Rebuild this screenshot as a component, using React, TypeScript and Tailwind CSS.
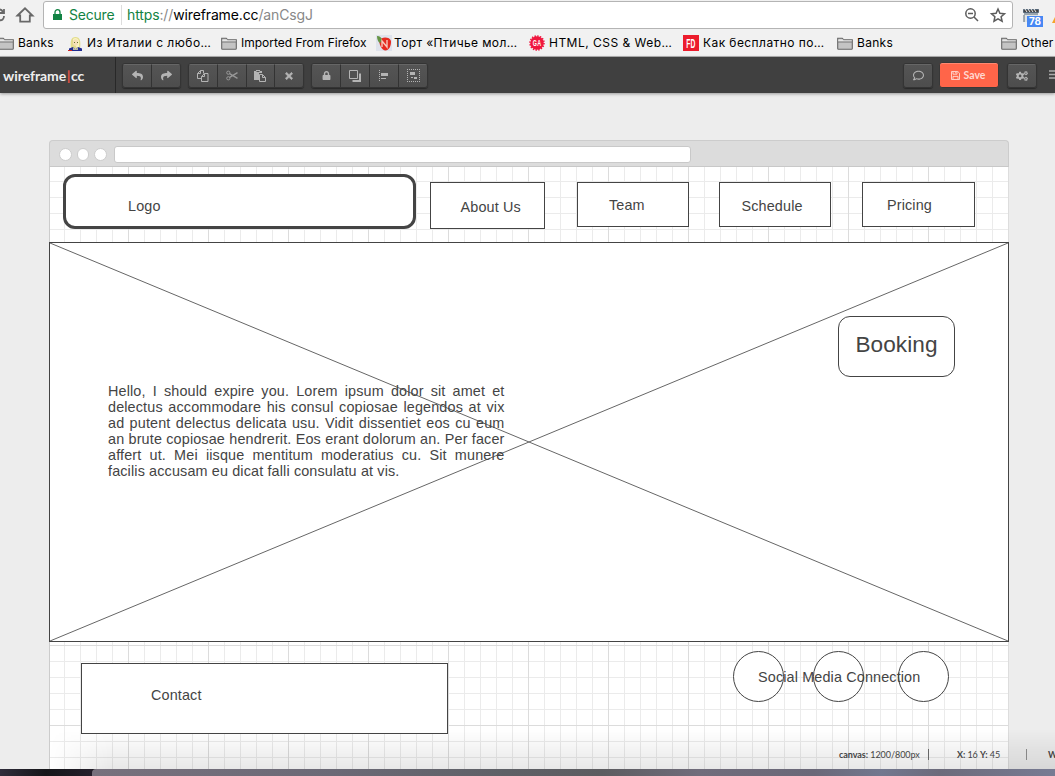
import React from "react";
import { FaReply, FaShare, FaTimes, FaLock, FaRegComment, FaCogs } from "react-icons/fa";

function Folder() {
  return (
    <svg width="16" height="13" viewBox="0 0 16 13" className="shrink-0" fill="none">
      <path d="M.7 11.500V1.200h4.600l1.400 1.600h8.600v8.700a.7.7 0 0 1-.7.7H1.400a.7.7 0 0 1-.7-.7Z" fill="#c4c4c4" stroke="#666" strokeWidth="1.100" />
      <path d="M1.200 4h13.600M1.400 3.100h5" stroke="#eee" strokeWidth="1" />
      <path d="M1 5h14" stroke="#777" strokeWidth="1" />
    </svg>
  );
}

function Blonde() {
  return (
    <svg width="15" height="15" viewBox="0 0 15 15" className="shrink-0">
      <path d="M3 12C2 5 3 1 7.500 1S13 5 12 12Z" fill="#e3dc8b" />
      <path d="M5 3c2-2 6-1 6 3v6H9L5 5Z" fill="#f8f4c0" />
      <ellipse cx="7.500" cy="6.500" rx="2.600" ry="3.200" fill="#f4dfb8" />
      <path d="M1 12.500 5 11l2.500 2L10 11l4 1.500V15H1Z" fill="#202b91" />
      <path d="M0 14h4v1H0Z" fill="#c22" />
      <path d="m5 11 2.500 2L10 11v3H5Z" fill="#b8b7a0" />
      <path d="M6 6h1v1H6Zm3 0h1v1H9Z" fill="#66752f" />
    </svg>
  );
}

function Strawberry() {
  return (
    <svg width="16" height="16" viewBox="0 0 16 16" className="shrink-0">
      <path d="M0 0h16v16H0Z" fill="#dfe3ec" />
      <path d="M3.500 5c2-3.500 10.500-3.500 11.500 1 .5 5-2.500 9.500-5.500 9.500C6 15.500 2.500 9 3.500 5Z" fill="#e52b20" />
      <path d="M1 1c3 0 4 1 5 4L4 8C2 7 1 4 1 1Z" fill="#669444" />
      <path d="M6 12V6l5 6V5" fill="none" stroke="#f7c8bb" strokeWidth="1.400" />
    </svg>
  );
}

function Badge() {
  return (
    <svg width="16" height="16" viewBox="0 0 16 16" className="shrink-0 overflow-visible">
      <circle cx="8" cy="8" r="6.800" fill="#f0173f" />
      <circle cx="8" cy="8" r="7" fill="none" stroke="#f0173f" strokeWidth="1.600" strokeDasharray="1.4 1.35" />
      <text x="8" y="11.300" fontFamily="Liberation Sans" fontSize="9" fontWeight="700" fill="#fff" textAnchor="middle" textLength="8.500" lengthAdjust="spacingAndGlyphs">GA</text>
    </svg>
  );
}

function FdBadge() {
  return (
    <svg width="16" height="16" viewBox="0 0 16 16" className="shrink-0 overflow-visible">
      <path d="M0 0h16v16H0Z" fill="#ec1c2c" />
      <text x="8" y="12.500" fontFamily="Liberation Sans" fontSize="12.500" fontWeight="700" fill="#fff" textAnchor="middle" textLength="9.500" lengthAdjust="spacingAndGlyphs">FD</text>
    </svg>
  );
}

function CopyIcon() {
  return (
    <svg width="12" height="12" viewBox="0 0 12 12" fill="none" stroke="currentColor">
      <path d="M4.500 8.500h-4v-5l3-3h3v3m-3-3v3h-3M7.500 3.500h3.500v8h-6.500v-5Zm0 0v3h-3" />
    </svg>
  );
}

function ScissorsIcon() {
  return (
    <svg width="12" height="11" viewBox="0 0 12 11" fill="none" stroke="#989898">
      <circle cx="2.300" cy="2.700" r="1.600" />
      <circle cx="2.300" cy="8.300" r="1.600" />
      <path d="m3.600 3.600 7.900 4.800M3.600 7.400l7.900-4.800" strokeWidth="1.300" />
    </svg>
  );
}

function PasteIcon() {
  return (
    <svg width="12" height="12" viewBox="0 0 12 12">
      <path d="M0 1h2V0h4v1h2v2H5v7H0Z" fill="currentColor" />
      <path d="M2.500 1.500h3" stroke="#555" />
      <path d="M5.500 4.500h3l3 3v4h-6Zm3 0v3h3" fill="none" stroke="currentColor" />
    </svg>
  );
}

function LayersIcon() {
  return (
    <svg width="12" height="12" viewBox="0 0 12 12">
      <path d="M3.500 10H10V3.500h2V12H3.500Z" fill="currentColor" />
      <path d="M.5.5h8v8h-8Z" fill="#505050" stroke="currentColor" />
    </svg>
  );
}

function AlignIcon() {
  return (
    <svg width="10" height="12" viewBox="0 0 10 12">
      <path d="M.5 0v12" stroke="currentColor" strokeDasharray="1 1" />
      <path d="M2 3h7v3H2Zm0 5h5v1H2Z" fill="currentColor" />
    </svg>
  );
}

function GroupIcon() {
  return (
    <svg width="13" height="13" viewBox="0 0 13 13">
      <path d="M0 .5h13M0 12.500h13M.5 0v13M12.500 0v13" stroke="currentColor" strokeDasharray="1 1" />
      <path d="M3 3h5v3H3Zm4 5h3v2H7ZM4 8h2v1H4Z" fill="currentColor" />
    </svg>
  );
}

function SaveIcon() {
  return (
    <svg width="9" height="9" viewBox="0 0 9 9" fill="none" stroke="currentColor" strokeWidth=".9">
      <path d="M.5.5h6.300l1.700 1.700v6.300h-8ZM2 .500v2.700h4V.5M2 8.500V5.400h5v3.100M4.700 1v1.300" />
    </svg>
  );
}

function Group({ children, className }: { children: React.ReactNode; className: string }) {
  return (
    <div className={`flex h-[25px] divide-x divide-[#333] overflow-hidden rounded-[3px] border border-[#343434] bg-gradient-to-b from-[#555] to-[#4d4d4d] text-[#b4b4b4] shadow-[0_1px_1px_#292929] ${className}`}>
      {children}
    </div>
  );
}

function Tool({ children }: { children: React.ReactNode }) {
  return <button className="flex min-w-0 flex-1 items-center justify-center border-t border-t-[#666]">{children}</button>;
}

function Bookmark({ icon, children, className }: { icon: React.ReactNode; children: React.ReactNode; className: string }) {
  return (
    <div className={`flex shrink-0 items-center whitespace-nowrap ${className}`}>
      {icon}
      <span>{children}</span>
    </div>
  );
}

function BrowserChrome() {
  return (
    <header className="h-[57px] shrink-0 overflow-hidden border-b border-[#aaa] bg-[#f1f1f1] font-['Inter',sans-serif] text-black">
      <div className="flex h-[30px] items-start">
        <svg width="43" height="30" viewBox="0 0 43 30" fill="none" stroke="#686868" strokeWidth="1.800">
          <path d="M-1 20c3 1 5-1 5-4M-2 10c2-1 4 0 5 2M4 9v4H0" />
          <path d="M17.500 15.500 25 8.300l7.500 7.200h-2.700v6.200h-9.600v-6.200Z" />
        </svg>
        <div className="mt-px flex h-7 w-[970px] shrink-0 items-center rounded-[3px] border border-[#b4b4b4] bg-white pl-[9px] text-[14px]">
          <svg width="9" height="12" viewBox="0 0 9 12">
            <path d="M0 5h9v6H0Z" fill="#128344" />
            <path d="M2 6V3.200a2.500 2.500 0 0 1 5 0V6" fill="none" stroke="#128344" strokeWidth="1.300" />
          </svg>
          <span className="-mt-px ml-[7px] w-[52px] tracking-[-0.2px] text-[#128344]">Secure</span>
          <span className="h-5 w-px bg-[#ddd]" />
          <span className="-mt-px ml-[5px] tracking-[-0.13px] text-[#888]">
            <span className="text-[#128344]">https</span>://<span className="text-black">wireframe.cc</span>/anCsgJ
          </span>
          <svg width="44" height="18" viewBox="0 0 44 18" fill="none" stroke="#5c5c5c" strokeWidth="1.500" className="ml-auto mr-[5px]">
            <circle cx="7.500" cy="7.500" r="4.700" />
            <path d="m11 11 4 4M5 7.500h5" />
            <path d="m35 3 1.900 4.200 4.600.5-3.400 3 1 4.500-4.100-2.400-4 2.400.9-4.500-3.400-3 4.600-.5Z" />
          </svg>
        </div>
        <svg width="42" height="30" viewBox="0 0 42 30" className="shrink-0">
          <path d="M11 10h14v12H11Z" fill="#e0e4e4" />
          <path d="M10.500 9.500h15v3h-15ZM11 14h14M11 15v7" fill="#444" stroke="#567" />
          <path d="m12 9 2 3m1-3 2 3m1-3 2 3m1-3 2 3" stroke="#eee" />
          <path d="M14 16h16v11H14Z" fill="#4788f4" />
          <text x="22" y="25" textAnchor="middle" fontFamily="Inter" fontSize="10" fontWeight="700" fill="#fff">78</text>
          <path d="m39 23 3-6v6Z" fill="#f5a32b" />
        </svg>
      </div>
      <div className="flex h-[26px] items-center text-[12px]">
        <Bookmark icon={<Folder />} className="-ml-[2px] w-[70px] gap-1 tracking-[0.25px]">Banks</Bookmark>
        <Bookmark icon={<Blonde />} className="w-[153px] gap-1 tracking-[0.48px]">Из Италии с любо…</Bookmark>
        <Bookmark icon={<Folder />} className="w-[155px] gap-1">Imported From Firefox</Bookmark>
        <Bookmark icon={<Strawberry />} className="w-[153px] gap-[2px] tracking-[0.38px]">Торт «Птичье мол…</Bookmark>
        <Bookmark icon={<Badge />} className="w-[154px] gap-1 tracking-[0.48px]">HTML, CSS &amp; Web…</Bookmark>
        <Bookmark icon={<FdBadge />} className="w-[154px] gap-1 tracking-[0.42px]">Как бесплатно по…</Bookmark>
        <Bookmark icon={<Folder />} className="w-[164px] gap-1 tracking-[0.3px]">Banks</Bookmark>
        <Bookmark icon={<Folder />} className="gap-1 tracking-[0.15px]">Other</Bookmark>
      </div>
    </header>
  );
}

function Toolbar() {
  return (
    <nav className="z-10 flex h-9 shrink-0 items-center bg-[#404040] font-['Lato',sans-serif] shadow-[0_1px_3px_#999]">
      <div className="flex h-full w-[116px] items-center border-r border-[#282828] pl-[3px] pt-px text-[14px] leading-5 font-bold text-[#eee]">
        <span className="w-[63px] tracking-[-0.05px]">wireframe</span>
        <span className="w-[5px] text-center font-bold text-[#e65242]">|</span>
        <span>cc</span>
      </div>
      <div className="ml-[6px] flex gap-[7px]">
        <Group className="w-[59px]">
          <Tool><FaReply size={11} /></Tool>
          <Tool><FaShare size={11} /></Tool>
        </Group>
        <Group className="w-[116px]">
          <Tool><CopyIcon /></Tool>
          <Tool><ScissorsIcon /></Tool>
          <Tool><PasteIcon /></Tool>
          <Tool><FaTimes size={10} stroke="currentColor" strokeWidth={35} /></Tool>
        </Group>
        <Group className="w-[117px]">
          <Tool><FaLock size={9} /></Tool>
          <Tool><LayersIcon /></Tool>
          <Tool><AlignIcon /></Tool>
          <Tool><GroupIcon /></Tool>
        </Group>
      </div>
      <div className="ml-auto flex shrink-0 items-center">
        <Group className="w-[30px]"><Tool><FaRegComment size={11} /></Tool></Group>
        <button className="ml-[6px] flex h-[26px] w-[60px] items-center justify-center gap-1 rounded-[3px] border border-[#383838] bg-[#ff6549] pr-[2px] pt-px text-[10.500px] font-bold text-[#ffd9d1] shadow-[inset_0_1px_#ff8870]">
          <SaveIcon />Save
        </button>
        <Group className="ml-[8px] w-[30px]"><Tool><FaCogs size={12} /></Tool></Group>
        <svg width="18" height="12" viewBox="0 0 18 12" stroke="#aaa" strokeWidth="1.300"><path d="M12 2h6M12 5.500h6M12 9h6" /></svg>
      </div>
    </nav>
  );
}

function Wireframe() {
  return (
    <section className="relative h-[603px] w-[960px] overflow-hidden bg-white text-[14.4px] leading-4 tracking-[0.14px] text-[#444]">
      <svg width="960" height="603" className="absolute inset-0" shapeRendering="crispEdges">
        <defs>
          <pattern id="minor" x="15" y="15" width="16" height="16" patternUnits="userSpaceOnUse">
            <path d="M.5 0v16M0 .5h16" stroke="#ebebeb" />
          </pattern>
          <pattern id="major" x="79" y="79" width="80" height="80" patternUnits="userSpaceOnUse">
            <path d="M.5 0v80M0 .5h80" stroke="#dcdcdc" />
          </pattern>
        </defs>
        <path d="M0 0h960v603H0Z" fill="url(#minor)" />
        <path d="M0 0h960v603H0Z" fill="url(#major)" />
        <path d="M.5 0v603" stroke="#ccc" />
        <path d="M959.500 0v603" stroke="#ddd" />
      </svg>

      <div className="absolute left-[14px] top-[8px] h-[55px] w-[353px] rounded-[12px] border-[3px] border-[#444] bg-white" />
      <span className="absolute left-[79px] top-[32px]">Logo</span>
      <div className="absolute left-[381px] top-[16px] h-[47px] w-[115px] border border-[#444] bg-white" />
      <span className="absolute left-[411.500px] top-[33px]">About Us</span>
      <div className="absolute left-[528px] top-[16px] h-[45px] w-[112px] border border-[#444] bg-white" />
      <span className="absolute left-[560px] top-[31px]">Team</span>
      <div className="absolute left-[670px] top-[16px] h-[45px] w-[112px] border border-[#444] bg-white" />
      <span className="absolute left-[692.500px] top-[32px]">Schedule</span>
      <div className="absolute left-[813px] top-[16px] h-[45px] w-[113px] border border-[#444] bg-white" />
      <span className="absolute left-[838px] top-[31px]">Pricing</span>

      <div className="absolute left-0 top-[76px] h-[400px] w-[960px] border border-[#444] bg-white">
        <svg width="958" height="398" viewBox="0 0 958 398">
          <path d="m0 0 958 398M958 0 0 398" stroke="#666" strokeWidth="1" />
        </svg>
      </div>
      <p className="absolute left-[59px] top-[217px] w-[396.500px] text-justify">
        Hello, I should expire you. Lorem ipsum dolor sit amet et delectus accommodare his consul copiosae legendos at vix ad putent delectus delicata usu. Vidit dissentiet eos cu eum an brute copiosae hendrerit. Eos erant dolorum an. Per facer affert ut. Mei iisque mentitum moderatius cu. Sit munere facilis accusam eu dicat falli consulatu at vis.
      </p>
      <div className="absolute left-[789px] top-[150px] h-[61px] w-[117px] rounded-[12px] border border-[#444] bg-white" />
      <span className="absolute left-[806.500px] top-[167px] text-[22.6px] leading-6 tracking-[0.05px]">Booking</span>

      <div className="absolute left-[32px] top-[497px] h-[71px] w-[367px] border border-[#444] bg-white" />
      <span className="absolute left-[102px] top-[521px]">Contact</span>
      <div className="absolute left-[684px] top-[485px] size-[51px] rounded-full border border-[#444] bg-white" />
      <div className="absolute left-[764px] top-[485px] size-[51px] rounded-full border border-[#444] bg-white" />
      <div className="absolute left-[849px] top-[485px] size-[51px] rounded-full border border-[#444] bg-white" />
      <span className="absolute left-[709px] top-[503px] whitespace-nowrap">Social Media Connection</span>
    </section>
  );
}

export default function App() {
  return (
    <div className="relative flex h-[776px] w-[1055px] flex-col overflow-hidden bg-[#ededed] font-['Liberation_Sans',sans-serif]">
      <BrowserChrome />
      <Toolbar />
      <main className="ml-[49px] mt-[47px] w-[960px] shrink-0">
        <div className="relative z-10 -mb-px flex h-[27px] items-center rounded-t-[4px] border border-[#ccc] border-b-[#c8c8c8] bg-[#dcdcdc] pl-[9px] pt-[2px]">
          <div className="flex gap-[5px]">
            <i className="size-[12.500px] rounded-full border border-[#ccc] bg-white" />
            <i className="size-[12.500px] rounded-full border border-[#ccc] bg-white" />
            <i className="size-[12.500px] rounded-full border border-[#ccc] bg-white" />
          </div>
          <div className="ml-[7px] h-[17px] w-[577px] rounded-[3px] border border-[#c9c9c9] bg-white" />
        </div>
        <Wireframe />
      </main>
      <div className="pointer-events-none absolute bottom-[7px] left-[49px] right-0 h-10 bg-gradient-to-b from-transparent to-black/9 [mask-image:linear-gradient(to_right,transparent,black_60px)]" />
      <div className="absolute bottom-[14px] left-[839px] flex h-[15px] w-[216px] items-center whitespace-nowrap font-['Lato',sans-serif] text-[9px] text-[#444]">
        <span className="w-[89px] shrink-0 tracking-[-0.05px]"><b>canvas:</b> 1200/800px</span>
        <span className="h-[11px] w-px shrink-0 bg-[#666]" />
        <span className="ml-7 w-[69px] shrink-0 tracking-[-0.08px]"><b>X:</b> 16 <b>Y:</b> 45</span>
        <span className="h-[11px] w-px shrink-0 bg-[#888]" />
        <b className="ml-[21px]">W</b>
      </div>
      <footer className="flex h-[7px] shrink-0 bg-[#1d1b22]">
        <div className="w-[92px] bg-gradient-to-r from-[#302d3b] via-[#151519] to-[#241f2b]" />
        <div className="flex-1 rounded-tl-[4px] bg-[linear-gradient(to_right,#77717d,#6b6976_25%,#5e6066_43%,#5c5c60_53%,#706c7b_63%,#6a6878_75%,#72788f_82%,#6c6b7b_88%,#777b93)]" />
      </footer>
    </div>
  );
}
